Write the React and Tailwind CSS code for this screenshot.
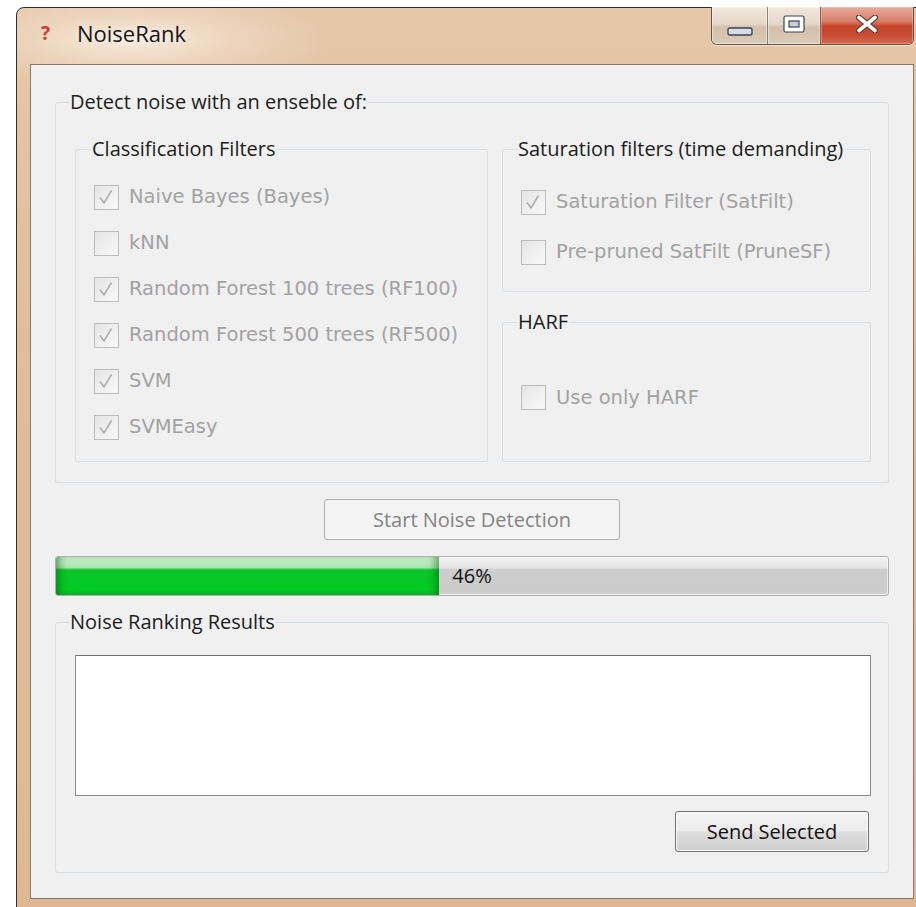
import React from 'react';

const segoe = "font-['Open_Sans',sans-serif]";
const tahoma = "font-['DejaVu_Sans',sans-serif]";

const classificationFilters = [
  { label: 'Naive Bayes (Bayes)', checked: true },
  { label: 'kNN', checked: false },
  { label: 'Random Forest 100 trees (RF100)', checked: true },
  { label: 'Random Forest 500 trees (RF500)', checked: true },
  { label: 'SVM', checked: true },
  { label: 'SVMEasy', checked: true },
];

const saturationFilters = [
  { label: 'Saturation Filter (SatFilt)', checked: true },
  { label: 'Pre-pruned SatFilt (PruneSF)', checked: false },
];

const progress = 46;

function CheckBox({ label, checked, rowClass }) {
  return (
    <div className={`flex items-center ${rowClass}`}>
      <span className="flex h-[25px] w-[25px] shrink-0 items-center justify-center border border-[#bcbcbc] bg-[linear-gradient(135deg,#e4e4e4,#f9f9f9)]">
        {checked && (
          <svg width="23" height="23" viewBox="0 0 23 23">
            <path d="M5 11.5 L9 17 L16.5 4.5" fill="none" stroke="#acacac" strokeWidth="1.5" />
          </svg>
        )}
      </span>
      <span className={`ml-[10px] whitespace-nowrap text-[19.5px] leading-[24px] text-[#a2a2a2] ${tahoma}`}>
        {label}
      </span>
    </div>
  );
}

function GroupBox({ title, titleClass = 'ml-[13px]', className = '', children }) {
  return (
    <fieldset className={`min-w-0 rounded-[3px] border border-[#d5dfe5] ${className}`}>
      <legend className={`${titleClass} px-[1px] text-[20px] leading-[24px] text-[#1c1c1c] ${segoe}`}>
        {title}
      </legend>
      {children}
    </fieldset>
  );
}

function CaptionButtons() {
  return (
    <div className="-mt-[1px] flex h-[38px] w-[203px] overflow-hidden rounded-b-[6px] border border-t-0 border-[#5f544b] shadow-[0_1px_0_rgba(255,255,255,0.5)]">
      <div className="flex w-[55px] items-end justify-center bg-[linear-gradient(to_bottom,#f1e7dc_0%,#e6d8c9_45%,#d3bfab_55%,#dccbb9_100%)] pb-[8px] shadow-[inset_0_0_0_1px_rgba(255,255,255,0.45)]">
        <svg width="26" height="9" viewBox="0 0 26 9">
          <rect x="1" y="1" width="24" height="7" rx="1.5" fill="#d6dde6" stroke="#3b4552" strokeWidth="1.4" />
        </svg>
      </div>
      <div className="flex w-[53px] items-center justify-center border-l border-[#8b7d70] bg-[linear-gradient(to_bottom,#f1e7dc_0%,#e6d8c9_45%,#d3bfab_55%,#dccbb9_100%)] pb-[4px] shadow-[inset_0_0_0_1px_rgba(255,255,255,0.45)]">
        <svg width="22" height="18" viewBox="0 0 22 18">
          <rect x="1" y="1" width="20" height="16" rx="1.5" fill="#ffffff" stroke="#3b4552" strokeWidth="1.2" />
          <rect x="6" y="6" width="10" height="6" fill="#c9ced6" stroke="#3b4552" strokeWidth="1.2" />
        </svg>
      </div>
      <div className="flex flex-1 items-center justify-center border-l border-[#8b5a4a] bg-[linear-gradient(to_bottom,#e6ab9b_0%,#d8806b_38%,#c7442b_52%,#c84b31_75%,#d66a4e_100%)] pb-[4px] shadow-[inset_0_0_0_1px_rgba(255,210,200,0.4)]">
        <svg width="22" height="18" viewBox="0 0 22 18">
          <path d="M3 2.5 L19 15.5 M19 2.5 L3 15.5" stroke="#553a36" strokeWidth="6" strokeLinecap="round" />
          <path d="M3 2.5 L19 15.5 M19 2.5 L3 15.5" stroke="#ffffff" strokeWidth="3.6" strokeLinecap="round" />
        </svg>
      </div>
    </div>
  );
}

export default function App() {
  return (
    <div className="h-[907px] w-[916px] overflow-hidden bg-white pt-[7px]">
      {/* Window frame */}
      <div className="ml-[16px] w-[912px] rounded-t-[8px] border border-[#2e2e2e] bg-[radial-gradient(ellipse_200px_50px_at_115px_32px,rgba(255,249,242,0.7),rgba(255,249,242,0.25)_55%,transparent),linear-gradient(to_bottom,#e6c7a8,#e1bc98_40%,#dfb893)] px-[13px] pb-[14px]">
        {/* Title bar */}
        <div className="flex h-[56px] justify-between">
          <div className="mt-[10px] flex h-[30px] items-center">
            <span className={`ml-[11px] w-[10px] text-[19px] font-bold text-[#d03a32] ${segoe}`}>?</span>
            <span className={`ml-[26px] text-[22px] leading-[30px] text-[#161616] [text-shadow:0_0_8px_rgba(255,255,255,0.9)] ${segoe}`}>
              NoiseRank
            </span>
          </div>
          <CaptionButtons />
        </div>

        {/* Client area */}
        <div className="border border-[#857a6f] bg-[#f0f0f0] px-[24px] pt-[25px] pb-[25px]">
          <GroupBox title="Detect noise with an enseble of:">
            <div className="flex gap-[14px] pt-[23px] pr-[17px] pb-[20px] pl-[19px]">
              <GroupBox title="Classification Filters" titleClass="ml-[15px]" className="w-[413px] shrink-0">
                <div className="pt-[13px] pb-[11px] pl-[18px]">
                  {classificationFilters.map((f) => (
                    <CheckBox key={f.label} label={f.label} checked={f.checked} rowClass="h-[46px]" />
                  ))}
                </div>
              </GroupBox>

              <div className="flex flex-1 flex-col">
                <GroupBox title="Saturation filters (time demanding)" titleClass="ml-[14px]">
                  <div className="pt-[16px] pb-[14px] pl-[18px]">
                    {saturationFilters.map((f) => (
                      <CheckBox key={f.label} label={f.label} checked={f.checked} rowClass="h-[50px]" />
                    ))}
                  </div>
                </GroupBox>

                <GroupBox title="HARF" titleClass="ml-[14px]" className="mt-[18px]">
                  <div className="flex h-[127px] items-center pl-[18px]">
                    <CheckBox label="Use only HARF" checked={false} rowClass="h-[50px]" />
                  </div>
                </GroupBox>
              </div>
            </div>
          </GroupBox>

          <button
            disabled
            className={`mx-auto mt-[16px] flex h-[41px] w-[296px] items-center justify-center rounded-[3px] border border-[#adb2b5] bg-[#f4f4f4] text-[20px] text-[#838383] ${segoe}`}
          >
            Start Noise Detection
          </button>

          {/* Progress bar */}
          <div className="relative mt-[16px] h-[40px] overflow-hidden rounded-[3px] border border-[#b0b0b0] bg-[linear-gradient(to_bottom,#f2f2f2_0%,#e4e4e4_28%,#cdcdcd_34%,#cbcbcb_90%,#d6d6d6_100%)] shadow-[inset_0_0_0_1px_rgba(255,255,255,0.6)]">
            <div
              className="h-full bg-[linear-gradient(to_bottom,#cdf0d1_0%,#a6e4ae_28%,#0dc42a_34%,#00cb24_85%,#0fb82c_100%)] shadow-[inset_8px_0_8px_-5px_rgba(0,90,0,0.55),inset_-8px_0_8px_-5px_rgba(0,90,0,0.55)]"
              style={{ width: `${progress}%` }}
            />
            <span className={`absolute inset-0 flex items-center justify-center text-[20px] text-[#111] ${segoe}`}>
              {progress}%
            </span>
          </div>

          <GroupBox title="Noise Ranking Results" className="mt-[14px]">
            <div className="flex flex-col pt-[21px] pr-[17px] pb-[20px] pl-[19px]">
              <div className="h-[141px] border border-[#8a8a8a] border-t-[#707070] bg-white" />
              <button
                className={`mt-[15px] mr-[2px] ml-auto flex h-[41px] w-[194px] items-center justify-center rounded-[3px] border border-[#707070] bg-[linear-gradient(to_bottom,#f3f3f3_0%,#ebebeb_48%,#dddddd_52%,#cfcfcf_100%)] text-[20px] text-[#111] shadow-[inset_0_0_0_1px_#fbfbfb] ${segoe}`}
              >
                Send Selected
              </button>
            </div>
          </GroupBox>
        </div>
      </div>
    </div>
  );
}
